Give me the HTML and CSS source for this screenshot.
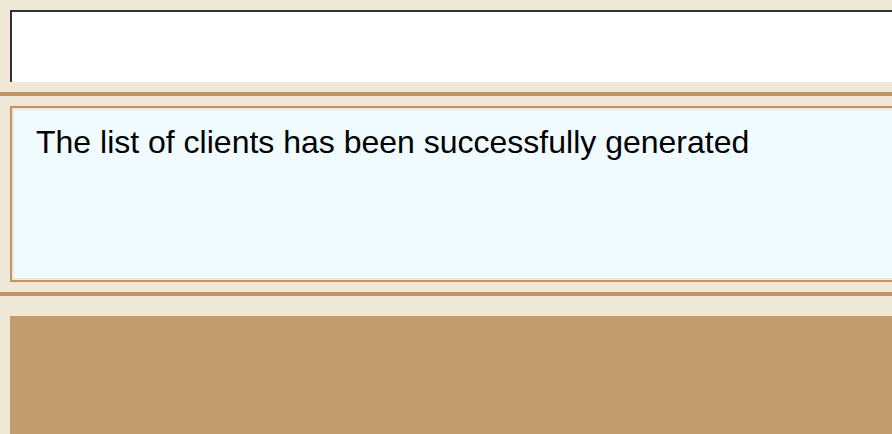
FILE: index.html
```html
<!DOCTYPE html>
<html lang="en">
<head>
<meta charset="utf-8">
<title>Clients</title>
<link rel="stylesheet" href="styles.css">
</head>
<body>
<section class="section"><div class="field"></div></section>
<section class="section"><div class="status" role="status">The list of clients has been successfully generated</div></section>
<main class="content"><div class="panel"></div></main>
</body>
</html>
```
FILE: styles.css
```css
* {
  box-sizing: border-box;
}

body {
  margin: 0;
  min-height: 100vh;
  display: flex;
  flex-direction: column;
  overflow: hidden;
  background: #f0e8d6;
  color: #000;
  font-family: "Liberation Sans", Arial, sans-serif;
}

.section {
  padding: 10px 0 10px 10px;
  border-bottom: 4px solid #c09264;
}

.field {
  min-height: 72px;
  border: solid #333;
  border-width: 2px 0 0 2px;
  background: #fff;
}

.status {
  min-height: 176px;
  padding: 12px 24px;
  border: 2px solid #c09264;
  border-right: 0;
  background: #f0fbff;
  box-shadow: inset 2px 2px #f0e8d6, inset 0 -2px #f0e8d6;
  font-size: 32px;
  line-height: 44px;
}

.content {
  flex: 1;
  display: flex;
  padding: 20px 0 0 10px;
}

.panel {
  flex: 1;
  background: #c49b6e;
}
```
